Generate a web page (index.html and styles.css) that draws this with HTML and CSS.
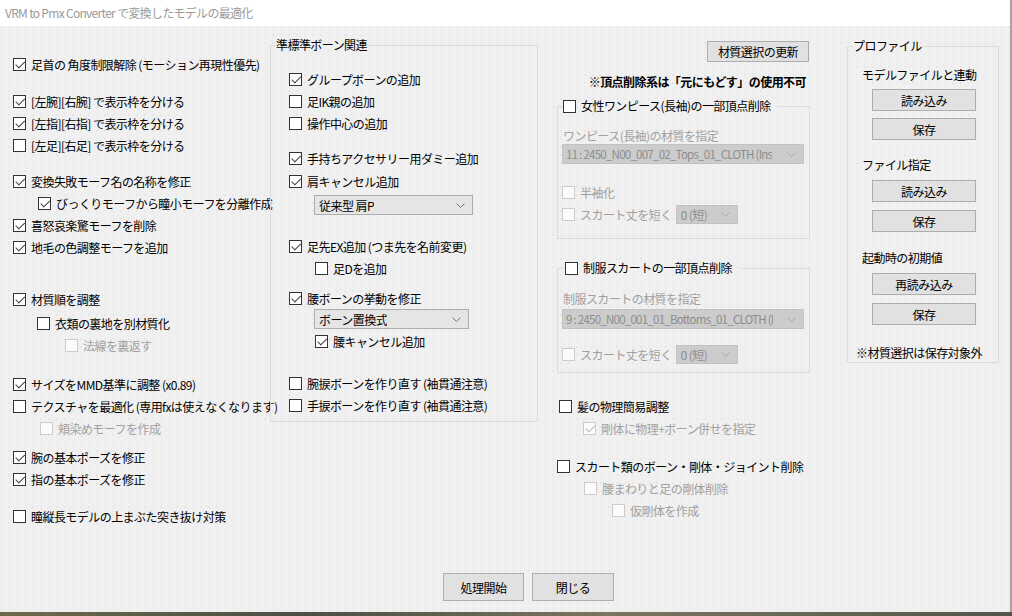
FILE: index.html
```html
<!DOCTYPE html>
<html lang="ja">
<head>
<meta charset="utf-8">
<title>VRM to Pmx Converter で変換したモデルの最適化</title>
<link rel="stylesheet" href="styles.css">
</head>
<body>
<div class="window">
  <div class="titlebar">VRM to Pmx Converter で変換したモデルの最適化</div>
  <div class="client">
    <div class="main">
      <div class="col1">
        <div class="row"><span class="cb on"></span>足首の 角度制限解除 (モーション再現性優先)</div>
        <div class="row mt15"><span class="cb on"></span>[左腕][右腕] で表示枠を分ける</div>
        <div class="row"><span class="cb on"></span>[左指][右指] で表示枠を分ける</div>
        <div class="row"><span class="cb"></span>[左足][右足] で表示枠を分ける</div>
        <div class="row mt14"><span class="cb on"></span>変換失敗モーフ名の名称を修正</div>
        <div class="row in25"><span class="cb on"></span>びっくりモーフから瞳小モーフを分離作成</div>
        <div class="row"><span class="cb on"></span>喜怒哀楽驚モーフを削除</div>
        <div class="row"><span class="cb on"></span>地毛の色調整モーフを追加</div>
        <div class="row mt30"><span class="cb on"></span>材質順を調整</div>
        <div class="row mt2 in24"><span class="cb"></span>衣類の裏地を別材質化</div>
        <div class="row in52 dis"><span class="cb"></span>法線を裏返す</div>
        <div class="row mt17"><span class="cb on"></span>サイズをMMD基準に調整 (x0.89)</div>
        <div class="row"><span class="cb"></span>テクスチャを最適化 (専用fxは使えなくなります)</div>
        <div class="row in27 dis"><span class="cb"></span>頬染めモーフを作成</div>
        <div class="row mt7"><span class="cb on"></span>腕の基本ポーズを修正</div>
        <div class="row"><span class="cb on"></span>指の基本ポーズを修正</div>
        <div class="row mt15"><span class="cb"></span>瞳縦長モデルの上まぶた突き抜け対策</div>
      </div>

      <fieldset class="group col2">
        <legend class="lg-text">準標準ボーン関連</legend>
        <div class="gbody bones">
          <div class="row mt15"><span class="cb on"></span>グループボーンの追加</div>
          <div class="row"><span class="cb"></span>足IK親の追加</div>
          <div class="row"><span class="cb"></span>操作中心の追加</div>
          <div class="row mt13"><span class="cb on"></span>手持ちアクセサリー用ダミー追加</div>
          <div class="row mt1"><span class="cb on"></span>肩キャンセル追加</div>
          <div class="sel sel-shoulder mt3"><span>従来型 肩P</span><svg class="chev" viewBox="0 0 9 5"><path d="M0.5 0.5 L4.5 4.5 L8.5 0.5"/></svg></div>
          <div class="row mt20"><span class="cb on"></span>足先EX追加 (つま先を名前変更)</div>
          <div class="row in26"><span class="cb"></span>足Dを追加</div>
          <div class="row mt8"><span class="cb on"></span>腰ボーンの挙動を修正</div>
          <div class="sel sel-waist"><span>ボーン置換式</span><svg class="chev" viewBox="0 0 9 5"><path d="M0.5 0.5 L4.5 4.5 L8.5 0.5"/></svg></div>
          <div class="row mt1 in26"><span class="cb on"></span>腰キャンセル追加</div>
          <div class="row mt20"><span class="cb"></span>腕捩ボーンを作り直す (袖貫通注意)</div>
          <div class="row"><span class="cb"></span>手捩ボーンを作り直す (袖貫通注意)</div>
        </div>
      </fieldset>

      <div class="col3">
        <button class="btn btn-update">材質選択の更新</button>
        <div class="warn">※頂点削除系は「元にもどす」の使用不可</div>

        <fieldset class="group vgroup onepiece">
          <legend class="lg-check"><span class="cb"></span>女性ワンピース(長袖)の一部頂点削除</legend>
          <div class="gbody vbody">
            <div class="label dis mt14">ワンピース(長袖)の材質を指定</div>
            <div class="sel sel-wide dis"><span>11 : 2450_N00_007_02_Tops_01_CLOTH (Ins</span><svg class="chev" viewBox="0 0 9 5"><path d="M0.5 0.5 L4.5 4.5 L8.5 0.5"/></svg></div>
            <div class="row dis mt17"><span class="cb"></span>半袖化</div>
            <div class="row dis"><span class="cb"></span>スカート丈を短く<div class="sel sel-small dis"><span>0 (短)</span><svg class="chev" viewBox="0 0 9 5"><path d="M0.5 0.5 L4.5 4.5 L8.5 0.5"/></svg></div></div>
          </div>
        </fieldset>

        <fieldset class="group vgroup skirt">
          <legend class="lg-check"><span class="cb"></span>制服スカートの一部頂点削除</legend>
          <div class="gbody vbody">
            <div class="label dis mt15">制服スカートの材質を指定</div>
            <div class="sel sel-wide dis mt2"><span>9 : 2450_N00_001_01_Bottoms_01_CLOTH (I</span><svg class="chev" viewBox="0 0 9 5"><path d="M0.5 0.5 L4.5 4.5 L8.5 0.5"/></svg></div>
            <div class="row dis mt14"><span class="cb"></span>スカート丈を短く<div class="sel sel-small dis"><span>0 (短)</span><svg class="chev" viewBox="0 0 9 5"><path d="M0.5 0.5 L4.5 4.5 L8.5 0.5"/></svg></div></div>
          </div>
        </fieldset>

        <div class="row mt22 in3"><span class="cb"></span>髪の物理簡易調整</div>
        <div class="row in27 dis"><span class="cb on"></span>剛体に物理+ボーン併せを指定</div>
        <div class="row mt16 in1"><span class="cb"></span>スカート類のボーン・剛体・ジョイント削除</div>
        <div class="row in28 dis"><span class="cb"></span>腰まわりと足の剛体削除</div>
        <div class="row in56 dis"><span class="cb"></span>仮剛体を作成</div>
      </div>

      <fieldset class="group col4">
        <legend class="lg-text">プロファイル</legend>
        <div class="gbody profile">
          <div class="label mt13">モデルファイルと連動</div>
          <button class="btn pbtn mt6">読み込み</button>
          <button class="btn pbtn mt7">保存</button>
          <div class="label mt17">ファイル指定</div>
          <button class="btn pbtn mt7">読み込み</button>
          <button class="btn pbtn mt8">保存</button>
          <div class="label mt18">起動時の初期値</div>
          <button class="btn pbtn mt7">再読み込み</button>
          <button class="btn pbtn mt8">保存</button>
          <div class="label note mt20">※材質選択は保存対象外</div>
        </div>
      </fieldset>
    </div>
    <div class="actions">
      <button class="btn act">処理開始</button>
      <button class="btn act">閉じる</button>
    </div>
  </div>
  <div class="desktop"></div>
</div>
</body>
</html>
```
FILE: styles.css
```css
* { box-sizing: border-box; }
html, body { margin: 0; padding: 0; }
body {
  width: 1012px;
  height: 616px;
  overflow: hidden;
  font-family: "Noto Sans CJK JP", "Noto Sans", sans-serif;
  font-size: 12px;
  letter-spacing: -0.55px;
  color: #000;
  background: #5a5b4a;
}
.window {
  width: 1012px;
  height: 616px;
  display: flex;
  flex-direction: column;
}
.titlebar {
  height: 26px;
  flex: none;
  background: #fff;
  color: #9a9a9a;
  line-height: 26px;
  padding-left: 5px;
  font-size: 12px;
  letter-spacing: -0.7px;
  border-right: 2px solid #a3a3a3;
  white-space: nowrap;
}
.client {
  height: 586px;
  flex: none;
  background-color: #f0f0f0;
  background-image: radial-gradient(circle at 1px 1px, #dedede 0.5px, transparent 0.9px);
  background-size: 8px 8px;
  border-right: 2px solid #a3a3a3;
  display: flex;
  flex-direction: column;
}
.desktop {
  flex: 1;
  background: linear-gradient(to right, #6d6a4c, #4b4f44 30%, #7a7560 60%, #54564a);
}
.main {
  height: 547px;
  display: flex;
  align-items: flex-start;
}

/* rows & checkboxes */
.row {
  height: 22px;
  display: flex;
  align-items: center;
  white-space: nowrap;
}
.cb {
  width: 13px;
  height: 13px;
  flex: none;
  border: 1px solid #333;
  background: #fff;
  position: relative;
  margin-right: 5px;
}
.cb.on::after {
  content: "";
  position: absolute;
  left: 3.5px;
  top: 0.5px;
  width: 3.5px;
  height: 7.5px;
  border: solid #444;
  border-width: 0 1.3px 1.3px 0;
  transform: rotate(45deg);
}
.dis { color: #a0a0a0; }
.dis .cb { border-color: #cccccc; background: #fbfbfb; }
.dis .cb.on::after { border-color: #b8b8b8; }

/* spacing */
.mt1 { margin-top: 1px; }
.mt2 { margin-top: 2px; }
.mt3 { margin-top: 3px; }
.mt6 { margin-top: 6px; }
.mt7 { margin-top: 7px; }
.mt8 { margin-top: 8px; }
.mt13 { margin-top: 13px; }
.mt14 { margin-top: 14px; }
.mt15 { margin-top: 15px; }
.mt16 { margin-top: 16px; }
.mt17 { margin-top: 17px; }
.mt18 { margin-top: 18px; }
.mt20 { margin-top: 20px; }
.mt22 { margin-top: 22px; }
.mt30 { margin-top: 30px; }
.in1 { margin-left: 1px; }
.in3 { margin-left: 3px; }
.in24 { margin-left: 24px; }
.in25 { margin-left: 25px; }
.in26 { margin-left: 26px; }
.in27 { margin-left: 27px; }
.in28 { margin-left: 28px; }
.in52 { margin-left: 52px; }
.in56 { margin-left: 56px; }

/* columns */
.col1 {
  width: 257px;
  margin-left: 13px;
  padding-top: 27px;
  flex: none;
}
.group {
  margin: 0;
  padding: 0;
  min-width: 0;
  border: 1px solid #dcdcdc;
  flex: none;
}
.group legend {
  padding: 0;
  line-height: 16px;
  height: 16px;
}
.lg-text {
  margin-left: 5px;
  padding-right: 1px !important;
}
.lg-check {
  display: flex;
  align-items: center;
  padding-right: 7px !important;
  white-space: nowrap;
}
.col2 {
  width: 268px;
  margin-top: 11px;
}
.bones {
  padding: 0 0 5px 18px;
}
.sel {
  height: 20px;
  border: 1px solid #adadad;
  background: #e5e5e5;
  display: flex;
  align-items: center;
  justify-content: space-between;
  padding-left: 4px;
  white-space: nowrap;
  overflow: hidden;
}
.sel span { overflow: hidden; }
.chev {
  width: 9px;
  height: 5px;
  flex: none;
  margin: 0 7px 0 4px;
  fill: none;
  stroke: #777;
  stroke-width: 1;
}
.sel.dis {
  background: #cccccc;
  border-color: #c2c2c2;
  color: #8c8c8c;
}
.sel.dis .chev { stroke: #a8a8a8; }
.sel-shoulder { width: 159px; margin-left: 25px; }
.sel-waist { width: 155px; margin-left: 25px; }

.col3 {
  width: 254px;
  margin-left: 18px;
  padding-top: 15px;
  display: flex;
  flex-direction: column;
  flex: none;
}
.btn {
  font-family: inherit;
  font-size: 12px;
  letter-spacing: inherit;
  color: #000;
  background: #e1e1e1;
  border: 1px solid #adadad;
  border-radius: 0;
  padding: 0;
  display: flex;
  align-items: center;
  justify-content: center;
}
.btn-update {
  width: 102px;
  height: 21px;
  align-self: flex-end;
  margin-right: 1px;
}
.warn {
  margin-top: 12px;
  line-height: 16px;
  font-weight: bold;
  text-align: right;
  padding-right: 4px;
  white-space: nowrap;
}
.vgroup {
  width: 253px;
  margin-left: 1px;
}
.onepiece { margin-top: 8px; }
.onepiece .lg-check { margin-left: 5px; }
.skirt { margin-top: 21px; }
.skirt .lg-check { margin-left: 7px; }
.vbody { padding-left: 4px; }
.onepiece .vbody { padding-bottom: 13px; }
.skirt .vbody { padding-bottom: 7px; }
.label {
  line-height: 16px;
  white-space: nowrap;
}
.vbody .label { margin-left: 1px; }
.sel-wide {
  width: 242px;
  font-size: 11.5px;
  letter-spacing: -0.75px;
  padding-left: 3px;
}
.sel-wide .chev { margin-left: 2px; }
.sel-small {
  width: 62px;
  height: 19px;
  margin-left: 4px;
}

.col4 {
  width: 152px;
  margin-left: 37px;
  margin-top: 12px;
}
.profile {
  padding: 0 0 1px 14px;
  display: flex;
  flex-direction: column;
  align-items: flex-start;
}
.pbtn {
  width: 104px;
  height: 22px;
  margin-left: 10px;
}
.note { margin-left: -6px; }

.actions {
  display: flex;
  gap: 8px;
  padding-left: 443px;
}
.act {
  width: 81px;
  height: 28px;
}
.act + .act { width: 82px; }
```
